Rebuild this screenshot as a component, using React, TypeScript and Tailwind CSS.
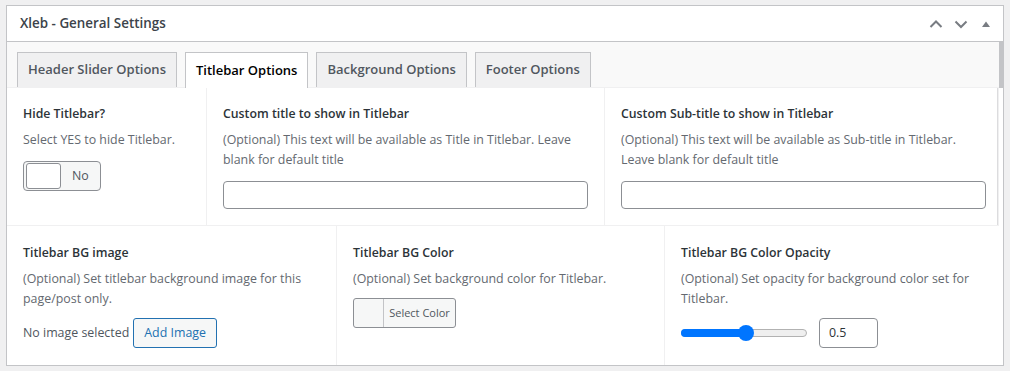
import React from "react";

const font = "font-['Open_Sans','Noto_Sans',sans-serif]";

function Tab({ label, active }: { label: string; active?: boolean }) {
  return (
    <div
      className={
        active
          ? "h-[36px] px-[10px] flex items-center border border-[#c3c4c7] border-b-0 bg-white text-[13px] font-semibold text-black -mb-px relative z-10"
          : "h-[35px] px-[10px] flex items-center border border-[#c3c4c7] border-b-0 bg-[#f0f0f1] text-[13px] font-semibold text-[#50575e]"
      }
    >
      {label}
    </div>
  );
}

function Label({ children }: { children: React.ReactNode }) {
  return <div className="text-[12.3px] leading-[20px] font-semibold text-[#2c3338]">{children}</div>;
}

function Desc({ children }: { children: React.ReactNode }) {
  return <div className="mt-[6px] text-[12.4px] leading-[20px] text-[#646970]">{children}</div>;
}

function TextInput({ w }: { w: string }) {
  return <div className={`${w} h-[28px] mt-[11px] rounded-[4px] border border-[#8c8f94] bg-white`} />;
}

export default function App() {
  return (
    <div className={`w-[1010px] h-[371px] bg-[#f0f0f1] pt-[5px] pl-[6px] ${font}`}>
      <div className="w-[998px] h-[361px] border border-[#c3c4c7] bg-white flex flex-col">
        {/* header */}
        <div className="h-[36px] border-b border-[#c3c4c7] flex items-center pl-[13px] pr-[9px] shrink-0">
          <div className="text-[13.4px] font-semibold text-[#3c434a] flex-1">Xleb - General Settings</div>
          <div className="flex items-center gap-[9px] text-[#787c82]">
            <svg width="16" height="16" viewBox="0 0 16 16" fill="none">
              <path d="M2.5 11 L8 5.5 L13.5 11" stroke="currentColor" strokeWidth="2" />
            </svg>
            <svg width="16" height="16" viewBox="0 0 16 16" fill="none">
              <path d="M2.5 5.5 L8 11 L13.5 5.5" stroke="currentColor" strokeWidth="2" />
            </svg>
            <svg width="16" height="16" viewBox="0 0 16 16">
              <path d="M4 11 L8 5.5 L12 11 Z" fill="currentColor" />
            </svg>
          </div>
        </div>
        {/* tabs bar */}
        <div className="h-[46px] bg-[#f9f9f9] flex shrink-0 relative">
          <div className="flex items-end gap-[8px] pl-[10px] flex-1 border-b border-[#f0f0f1]">
            <Tab label="Header Slider Options" />
            <Tab label="Titlebar Options" active />
            <Tab label="Background Options" />
            <Tab label="Footer Options" />
          </div>
          <div className="w-[4px] bg-[#c3c4c7]" />
        </div>
        {/* row 1 */}
        <div className="flex border-b border-[#f0f0f1] mr-[4px] border-r">
          <div className="w-[200px] border-r border-[#f0f0f1] pt-[16px] pl-[16px] pr-[16px] pb-[16px]">
            <Label>Hide Titlebar?</Label>
            <Desc>Select YES to hide Titlebar.</Desc>
            <div className="mt-[11px] w-[78px] h-[30px] rounded-[4px] border border-[#8c8f94] bg-[#f6f7f7] flex items-center pl-[2px]">
              <div className="w-[35px] h-[26px] rounded-[3px] border border-[#8c8f94] bg-white" />
              <div className="ml-[11px] text-[12.4px] text-[#50575e]">No</div>
            </div>
          </div>
          <div className="w-[398px] border-r border-[#f0f0f1] pt-[16px] pl-[16px] pr-[17px] pb-[16px]">
            <Label>Custom title to show in Titlebar</Label>
            <Desc>(Optional) This text will be available as Title in Titlebar. Leave blank for default title</Desc>
            <TextInput w="w-[365px]" />
          </div>
          <div className="flex-1 pt-[16px] pl-[16px] pr-[11px] pb-[16px] border-r border-[#dcdcde]">
            <Label>Custom Sub-title to show in Titlebar</Label>
            <Desc>(Optional) This text will be available as Sub-title in Titlebar. Leave blank for default title</Desc>
            <TextInput w="w-[365px]" />
          </div>
        </div>
        {/* row 2 */}
        <div className="flex flex-1">
          <div className="w-[330px] border-r border-[#f0f0f1] pt-[17px] pl-[16px] pr-[16px]">
            <Label>Titlebar BG image</Label>
            <Desc>(Optional) Set titlebar background image for this page/post only.</Desc>
            <div className="mt-[9px] flex items-center">
              <span className="text-[12.4px] text-[#50575e]">No image selected</span>
              <div className="ml-[4px] h-[30px] px-[10px] rounded-[3px] border border-[#2271b1] bg-[#f6f7f7] text-[12.4px] text-[#2271b1] flex items-center">
                Add Image
              </div>
            </div>
          </div>
          <div className="w-[328px] border-r border-[#f0f0f1] pt-[17px] pl-[16px]">
            <Label>Titlebar BG Color</Label>
            <Desc>(Optional) Set background color for Titlebar.</Desc>
            <div className="mt-[9px] w-[103px] h-[30px] rounded-[3px] border border-[#8c8f94] bg-[#f6f7f7] flex">
              <div className="w-[30px] border-r border-[#c3c4c7]" />
              <div className="flex-1 flex items-center justify-center text-[11px] text-[#50575e]">Select Color</div>
            </div>
          </div>
          <div className="flex-1 pt-[17px] pl-[16px]">
            <Label>Titlebar BG Color Opacity</Label>
            <Desc>(Optional) Set opacity for background color set for Titlebar.</Desc>
            <div className="mt-[9px] flex items-center">
              <div className="relative w-[126px] h-[8px] rounded-full bg-[#efefef] border border-[#b2b2b2]">
                <div className="absolute -left-px -top-px h-[8px] w-[65px] rounded-full bg-[#0075ff]" />
                <div className="absolute left-[56px] top-[-5px] w-[16px] h-[16px] rounded-full bg-[#0075ff]" />
              </div>
              <div className="ml-[12px] w-[59px] h-[30px] rounded-[4px] border border-[#8c8f94] bg-white flex items-center pl-[9px] text-[12.4px] text-[#2c3338]">
                0.5
              </div>
            </div>
          </div>
        </div>
      </div>
    </div>
  );
}
